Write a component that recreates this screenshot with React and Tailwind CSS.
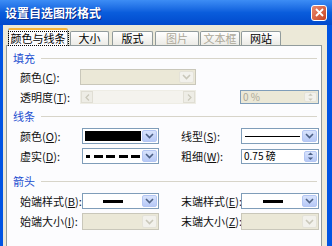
import React from 'react';

const font = { fontFamily: '"Noto Sans CJK SC", "Noto Sans", sans-serif' };

const Chevron = ({ disabled }) => (
  <svg width="9" height="6" viewBox="0 0 9 6">
    <path d="M1 1l3.5 3.5L8 1" fill="none" stroke={disabled ? '#c9c7ba' : '#4d6185'} strokeWidth="1.6" />
  </svg>
);

const DropBtn = ({ disabled }) => (
  <div
    className={`w-[15px] h-full flex items-center justify-center border rounded-[2px] ${
      disabled ? 'bg-[#f2f1ec] border-[#e4e2d8]' : 'bg-gradient-to-b from-[#d8e3fc] to-[#b7c9f6] border-[#b4c6f3]'
    }`}
  >
    <Chevron disabled={disabled} />
  </div>
);

const SpinBtn = ({ disabled }) => (
  <div
    className={`w-[13px] h-full flex flex-col items-center justify-center gap-[2px] border rounded-[2px] ${
      disabled ? 'bg-[#f2f1ec] border-[#e4e2d8]' : 'bg-gradient-to-b from-[#d8e3fc] to-[#b7c9f6] border-[#b4c6f3]'
    }`}
  >
    <svg width="7" height="4" viewBox="0 0 7 4" className="block">
      <path d="M0.5 3.5L3.5 0.5L6.5 3.5z" fill={disabled ? '#c9c7ba' : '#4d6185'} />
    </svg>
    <svg width="7" height="4" viewBox="0 0 7 4" className="block">
      <path d="M0.5 0.5L3.5 3.5L6.5 0.5z" fill={disabled ? '#c9c7ba' : '#4d6185'} />
    </svg>
  </div>
);

const Combo = ({ width, height = 16, disabled, children }) => (
  <div
    className={`shrink-0 flex items-stretch p-[1px] border ${
      disabled ? 'bg-[#ebe8d7] border-[#c9c7ba]' : 'bg-white border-[#7f9db9]'
    }`}
    style={{ width, height }}
  >
    <div className="flex-1 flex items-center min-w-0">{children}</div>
    <DropBtn disabled={disabled} />
  </div>
);

const Label = ({ text, acc, width, ml = 0 }) => (
  <span className="shrink-0 text-[11px] leading-none whitespace-nowrap text-[#111]" style={{ width, marginLeft: ml }}>
    {text}(<span className="underline">{acc}</span>):
  </span>
);

const Section = ({ title, mt }) => (
  <div className="h-[14px] flex items-center pl-[6px] pr-[4px]" style={{ marginTop: mt }}>
    <span className="text-[11px] leading-none text-[#1d4fd0]">{title}</span>
    <div className="flex-1 h-px bg-[#d7d4c9] ml-[6px]" />
  </div>
);

const Tab = ({ label, grey, width }) => (
  <div
    className="h-[14px] flex items-center justify-center bg-gradient-to-b from-white to-[#ecebe6] border border-b-0 border-[#919b9c] rounded-t-[2px]"
    style={{ width }}
  >
    <span className={`text-[11px] leading-none whitespace-nowrap ${grey ? 'text-[#aca899]' : 'text-black'}`}>{label}</span>
  </div>
);

const ArrowLine = () => (
  <div className="w-full flex justify-center">
    <div className="w-[20px] h-[3px] bg-black" />
  </div>
);

export default function App() {
  return (
    <div className="w-[332px] h-[246px] overflow-hidden bg-[#0054e3] flex flex-col" style={font}>
      {/* title bar */}
      <div className="h-[25px] shrink-0 flex items-center justify-between pl-[5px] pr-[5px] bg-gradient-to-b from-[#3d8df5] via-[#0a5ddc] to-[#0249cc]">
        <span className="text-white text-[12px] leading-none font-bold [text-shadow:1px_1px_0_#0a2a8a]">设置自选图形格式</span>
        <div className="w-[16px] h-[16px] rounded-[3px] border border-white bg-gradient-to-br from-[#e98a6e] to-[#c8401e] flex items-center justify-center">
          <svg width="9" height="9" viewBox="0 0 9 9">
            <path d="M1 1l7 7M8 1l-7 7" stroke="white" strokeWidth="1.8" />
          </svg>
        </div>
      </div>

      {/* body */}
      <div className="flex-1 ml-[3px] mr-[5px] bg-[#ece9d8] flex flex-col pt-[3px] pl-[3px] pr-[5px]">
        <div className="flex items-end pl-[2px] gap-[2px]">
          <div className="w-[60px] h-[18px] flex items-center justify-center bg-[#fcfcfe] border border-b-0 border-[#919b9c] border-t-2 border-t-[#f5b43a] rounded-t-[2px] relative z-10 mb-[-1px]">
            <span className="text-[11px] leading-none px-[2px] py-[1px] border border-dotted border-black whitespace-nowrap">颜色与线条</span>
          </div>
          <Tab label="大小" width={39} />
          <div className="ml-[1px]"><Tab label="版式" width={41} /></div>
          <Tab label="图片" grey width={44} />
          <div className="-ml-[1px]"><Tab label="文本框" grey width={40} /></div>
          <div className="-ml-[1px]"><Tab label="网站" width={40} /></div>
        </div>

        <div className="flex-1 bg-[#fcfcfe] border border-[#919b9c] border-b-0 flex flex-col pt-[5px]">
          <Section title="填充" />
          <div className="flex items-center mt-[4px] pl-[13px]">
            <Label text="颜色" acc="C" width={60} />
            <Combo width={116} disabled />
          </div>
          <div className="flex items-center mt-[5px] pl-[13px]">
            <Label text="透明度" acc="T" width={60} />
            <div className="w-[116px] h-[14px] flex items-stretch bg-[#f4f3ee] border border-[#eeede5]">
              <div className="w-[12px] flex items-center justify-center bg-[#eeede6] border border-[#e0ded4]">
                <svg width="5" height="7" viewBox="0 0 5 7"><path d="M4 0.5L1 3.5L4 6.5" fill="none" stroke="#c9c7ba" strokeWidth="1.2" /></svg>
              </div>
              <div className="flex-1" />
              <div className="w-[12px] flex items-center justify-center bg-[#eeede6] border border-[#e0ded4]">
                <svg width="5" height="7" viewBox="0 0 5 7"><path d="M1 0.5L4 3.5L1 6.5" fill="none" stroke="#c9c7ba" strokeWidth="1.2" /></svg>
              </div>
            </div>
            <div className="ml-[44px] w-[79px] h-[14px] flex items-stretch p-[1px] bg-[#ebe8d7] border border-[#7f9db9]">
              <span className="flex-1 text-[10px] leading-[10px] text-[#aca899] pl-[1px] flex items-center">0 %</span>
              <SpinBtn disabled />
            </div>
          </div>

          <Section title="线条" mt={5} />
          <div className="flex items-center mt-[5px] pl-[13px]">
            <Label text="颜色" acc="O" width={62} />
            <Combo width={77}>
              <div className="w-full h-full bg-black border border-white" />
            </Combo>
            <Label text="线型" acc="S" width={60} ml={22} />
            <Combo width={78}>
              <div className="w-full h-px bg-black mx-[2px]" />
            </Combo>
          </div>
          <div className="flex items-center mt-[4px] pl-[13px]">
            <Label text="虚实" acc="D" width={62} />
            <Combo width={77}>
              <div className="w-full px-[2px] flex justify-between">
                {[0, 1, 2, 3, 4].map((i) => (
                  <div key={i} className={`h-[3px] bg-black ${i === 0 ? 'w-[4px]' : 'w-[9px]'}`} />
                ))}
              </div>
            </Combo>
            <Label text="粗细" acc="W" width={60} ml={22} />
            <div className="w-[78px] h-[15px] flex items-stretch p-[1px] bg-white border border-[#7f9db9]">
              <span className="flex-1 text-[10px] leading-[10px] text-black pl-[1px] flex items-center">0.75 磅</span>
              <SpinBtn />
            </div>
          </div>

          <Section title="箭头" mt={10} />
          <div className="flex items-center mt-[5px] pl-[13px]">
            <Label text="始端样式" acc="B" width={62} />
            <Combo width={77}><ArrowLine /></Combo>
            <Label text="末端样式" acc="E" width={60} ml={22} />
            <Combo width={78}><ArrowLine /></Combo>
          </div>
          <div className="flex items-center mt-[4px] pl-[13px]">
            <Label text="始端大小" acc="I" width={62} />
            <Combo width={77} height={17} disabled />
            <Label text="末端大小" acc="Z" width={60} ml={22} />
            <Combo width={78} height={17} disabled />
          </div>
        </div>
      </div>
    </div>
  );
}
